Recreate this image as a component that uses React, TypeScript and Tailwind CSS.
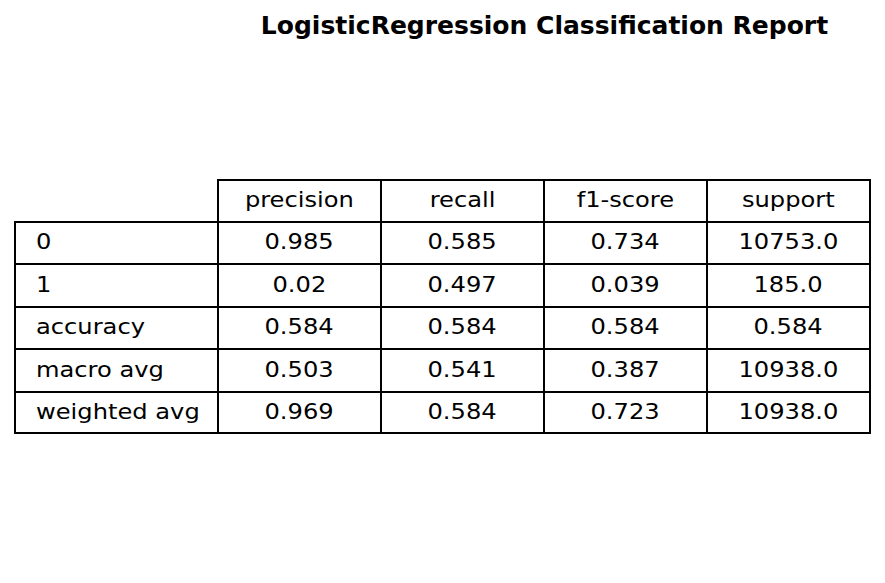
import React from 'react';

const headers = ['precision', 'recall', 'f1-score', 'support'];

const rows: { label: string; values: string[]; h: string }[] = [
    { label: '0', values: ['0.985', '0.585', '0.734', '10753.0'], h: 'h-[42px]' },
    { label: '1', values: ['0.02', '0.497', '0.039', '185.0'], h: 'h-[43px]' },
    { label: 'accuracy', values: ['0.584', '0.584', '0.584', '0.584'], h: 'h-[42px]' },
    { label: 'macro avg', values: ['0.503', '0.541', '0.387', '10938.0'], h: 'h-[43px]' },
    { label: 'weighted avg', values: ['0.969', '0.584', '0.723', '10938.0'], h: 'h-[41px]' },
];

const cols = 'grid grid-cols-[205px_163px_163px_163px_163px]';

export default function App() {
    return (
        <div
            className="w-[885px] h-[583px] bg-white text-black flex flex-col"
            style={{ fontFamily: '"DejaVu Sans", Verdana, sans-serif' }}
        >
            <div className="flex justify-center pl-[204px] pt-[8px] h-[179px]">
                <h1 className="text-[25px] font-bold leading-[35px] whitespace-nowrap">LogisticRegression Classification Report</h1>
            </div>

            <div className="ml-[14px] w-[857px] text-[21px]">
                {/* header row, corner cell left empty */}
                <div className={`${cols} h-[44px]`}>
                    <div className="border-b-2 border-r-2 border-black" />
                    {headers.map(h => (
                        <div
                            key={h}
                            className="flex items-center justify-center border-t-2 border-b-2 border-r-2 border-black"
                        >
                            <span className="inline-block scale-x-[1.15]">{h}</span>
                        </div>
                    ))}
                </div>

                {rows.map(row => (
                    <div key={row.label} className={`${cols} ${row.h}`}>
                        <div className="flex items-center pl-[20px] border-l-2 border-r-2 border-b-2 border-black">
                            <span className="inline-block origin-left scale-x-[1.15]">{row.label}</span>
                        </div>
                        {row.values.map((v, i) => (
                            <div key={i} className="flex items-center justify-center border-r-2 border-b-2 border-black">
                                <span className="inline-block scale-x-[1.15]">{v}</span>
                            </div>
                        ))}
                    </div>
                ))}
            </div>
        </div>
    );
}
